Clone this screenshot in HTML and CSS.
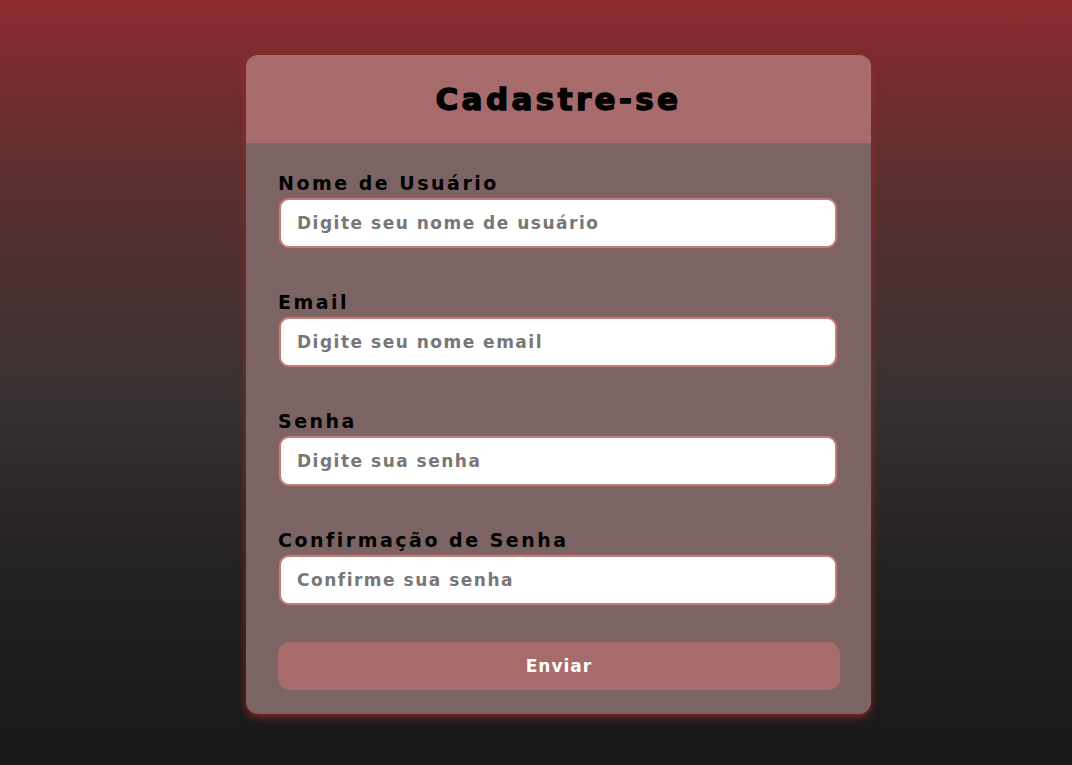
FILE: index.html
```html
<!DOCTYPE html>
<html lang="pt-BR">
<head>
<meta charset="utf-8">
<title>Cadastre-se</title>
<link rel="stylesheet" href="styles.css">
</head>
<body>
<main class="page">
  <form class="card">
    <header class="card-header">
      <h1 class="card-title">Cadastre-se</h1>
    </header>
    <div class="card-body">
      <div class="field">
        <label class="field-label" for="user">Nome de Usuário</label>
        <input class="field-input" id="user" type="text" placeholder="Digite seu nome de usuário">
      </div>
      <div class="field">
        <label class="field-label" for="email">Email</label>
        <input class="field-input" id="email" type="email" placeholder="Digite seu nome email">
      </div>
      <div class="field">
        <label class="field-label" for="pass">Senha</label>
        <input class="field-input" id="pass" type="password" placeholder="Digite sua senha">
      </div>
      <div class="field">
        <label class="field-label" for="pass2">Confirmação de Senha</label>
        <input class="field-input" id="pass2" type="password" placeholder="Confirme sua senha">
      </div>
      <button class="submit" type="button">Enviar</button>
    </div>
  </form>
</main>
</body>
</html>
```

FILE: styles.css
```css
* { box-sizing: border-box; }

html, body {
  margin: 0;
  height: 100%;
}

body {
  background: linear-gradient(180deg, #8b2b2f 0%, #5a2f30 25%, #3a3232 50%, #232121 75%, #181818 100%);
  font-family: "DejaVu Sans", "Noto Sans", sans-serif;
}

.page {
  display: flex;
  justify-content: center;
  padding: 55px 0 0 45px;
}

.card {
  width: 625px;
  background: #7d6464;
  border-radius: 12px;
  overflow: hidden;
  box-shadow: 0 3px 8px rgba(170, 40, 40, 0.75);
}

.card-header {
  height: 88px;
  background: #a86b6b;
  display: flex;
  align-items: center;
  justify-content: center;
}

.card-title {
  margin: 0;
  font-size: 31px;
  font-weight: 900;
  color: #000;
  letter-spacing: 3.4px;
  -webkit-text-stroke: 1.4px #000;
}

.card-body {
  padding: 27px 31px 24px 32px;
  display: flex;
  flex-direction: column;
}

.field {
  display: flex;
  flex-direction: column;
  margin-bottom: 41px;
}

.field:last-of-type {
  margin-bottom: 37px;
}

.field-label {
  font-size: 19px;
  line-height: 26px;
  font-weight: 700;
  color: #000;
  letter-spacing: 2.5px;
  margin-bottom: 2px;
}

.field-input {
  height: 50px;
  margin: 0 3px 0 1px;
  border: 2px solid #c47c7c;
  border-radius: 10px;
  background: #fff;
  padding: 0 16px;
  font-family: inherit;
  font-size: 17px;
  font-weight: 700;
  letter-spacing: 1.5px;
  color: #333;
  outline: none;
  box-shadow: 0 0 2px rgba(190, 100, 100, 0.8);
}

.field-input::placeholder {
  color: #777;
}

.submit {
  height: 48px;
  border: none;
  border-radius: 12px;
  background: #a86b6b;
  color: #fff;
  font-family: inherit;
  font-size: 17px;
  font-weight: 700;
  letter-spacing: 1px;
  cursor: pointer;
}
```
